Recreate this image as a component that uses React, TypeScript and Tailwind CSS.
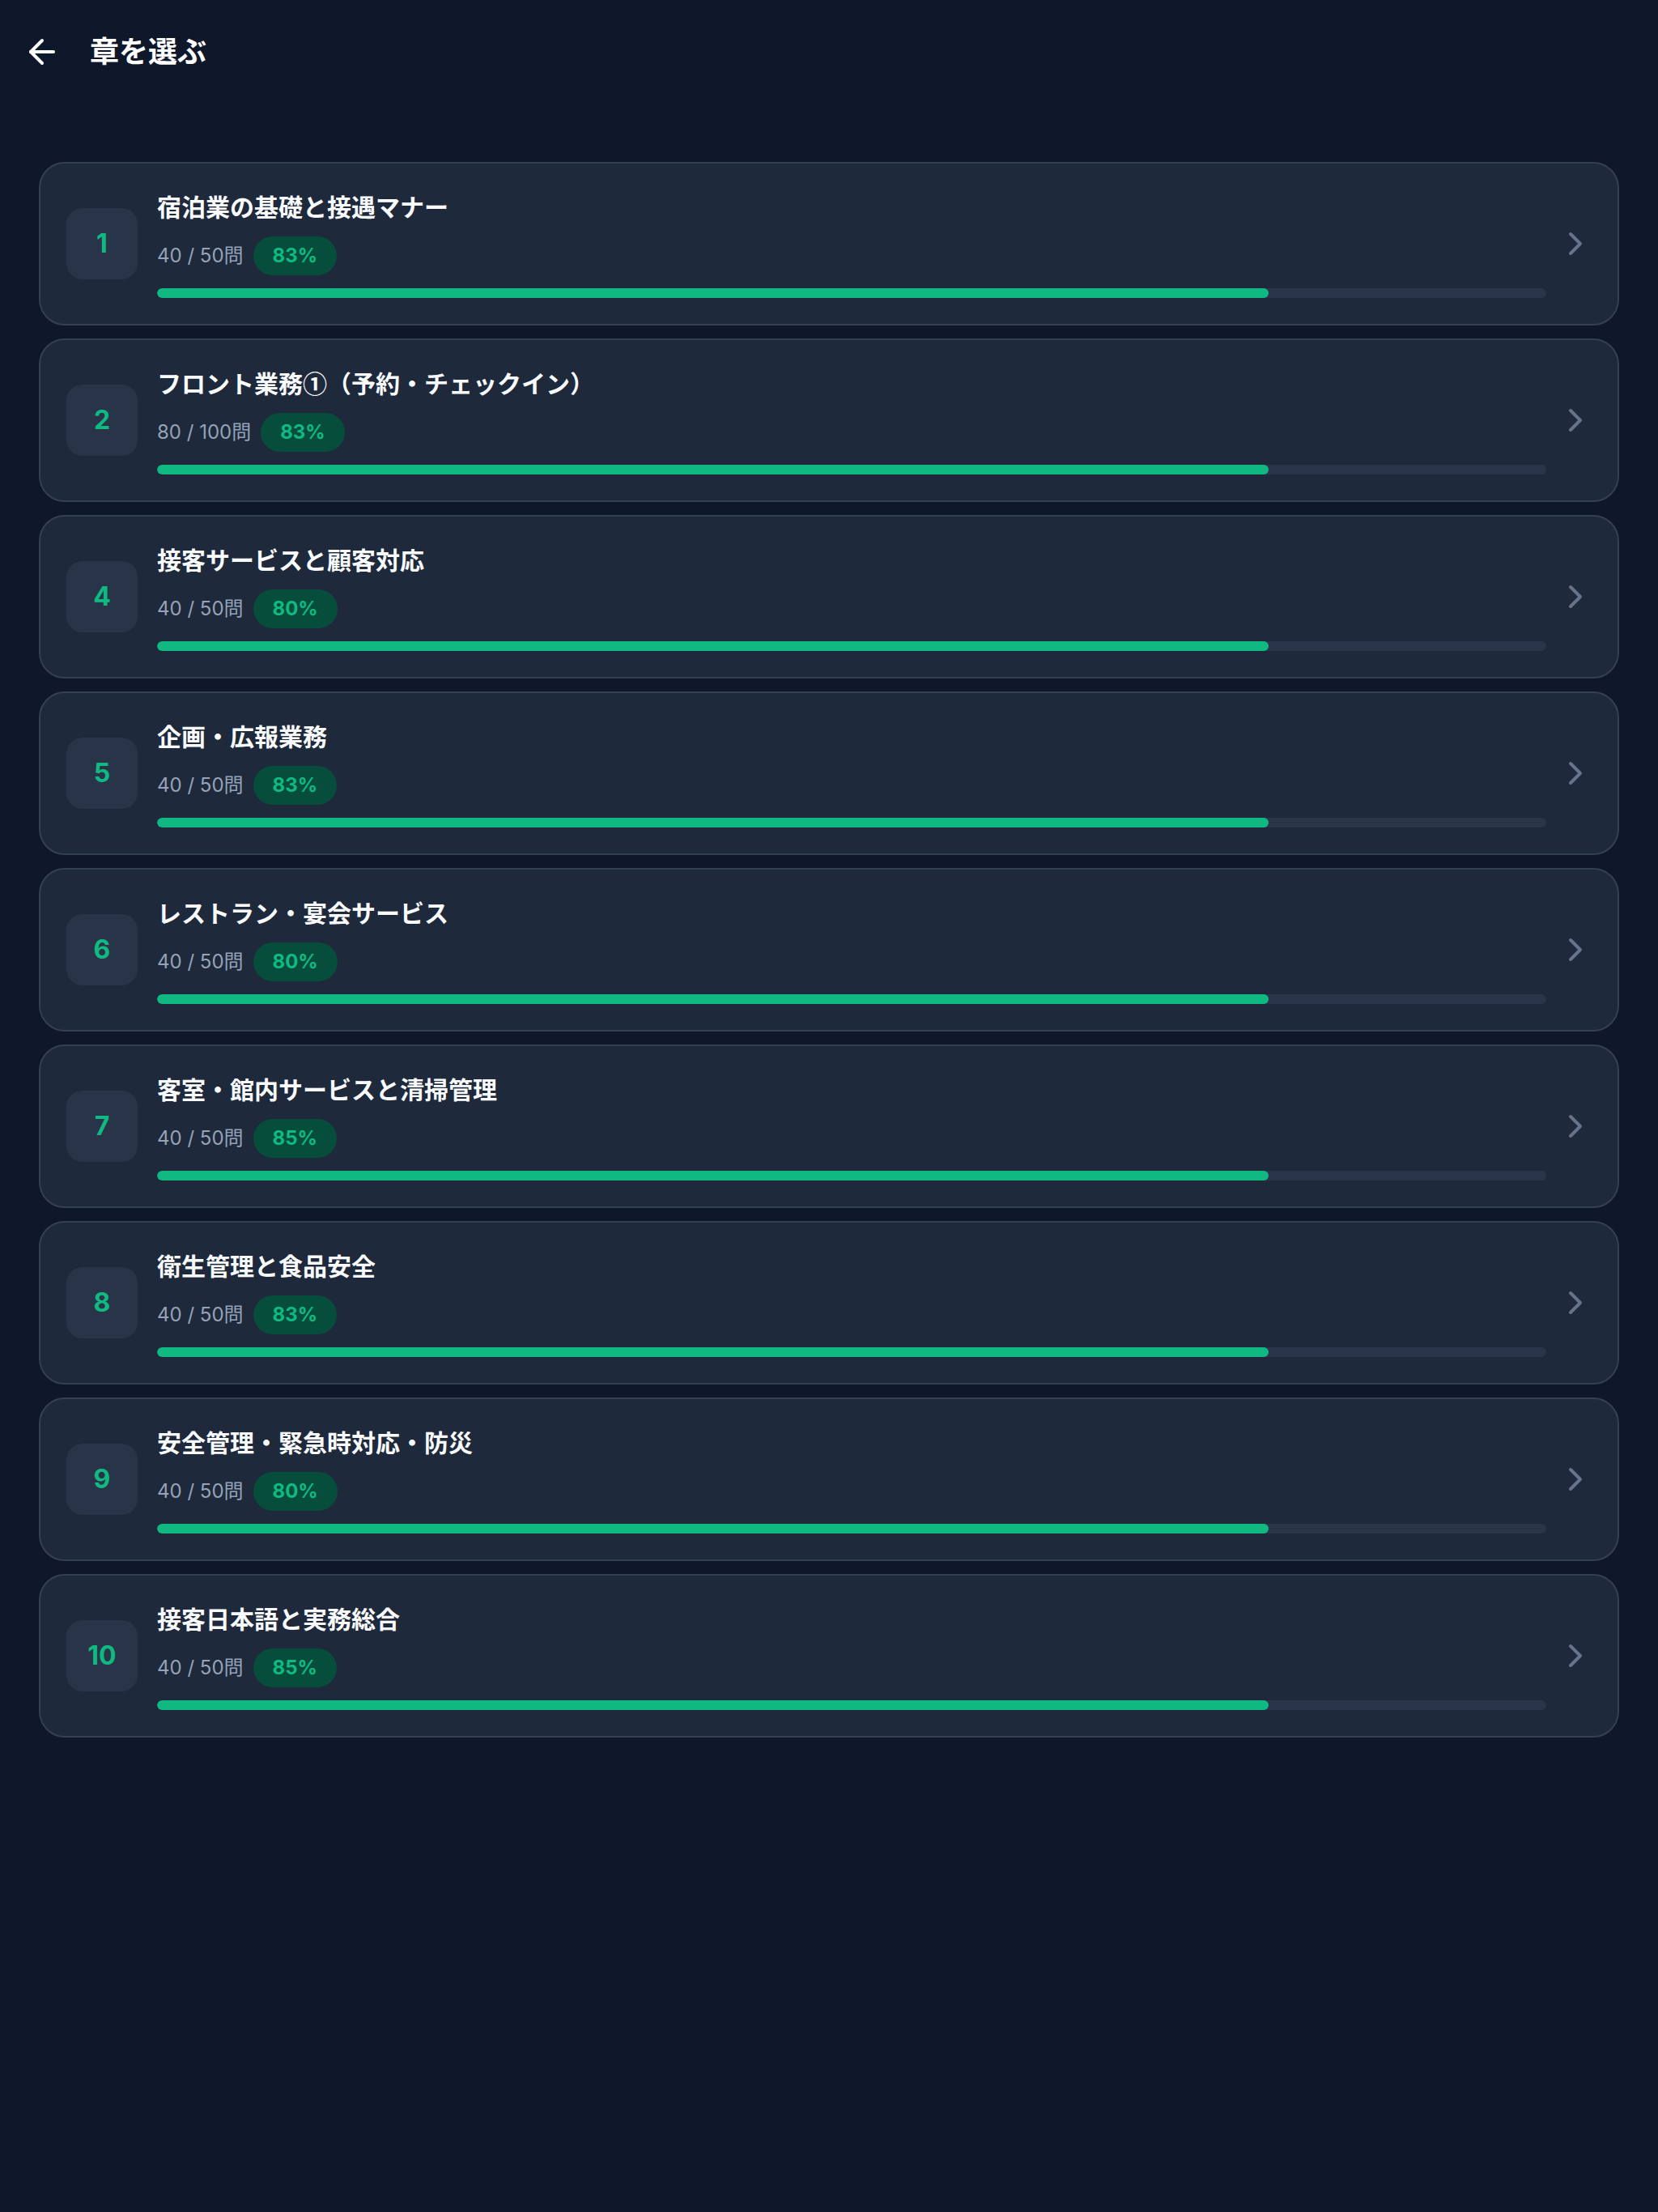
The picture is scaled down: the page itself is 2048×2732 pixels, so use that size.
import { ArrowLeft, ChevronRight } from "lucide-react"

type Chapter = {
  no: number
  title: string
  done: number
  total: number
  rate: number
}

const chapters: Chapter[] = [
  { no: 1, title: "宿泊業の基礎と接遇マナー", done: 40, total: 50, rate: 83 },
  { no: 2, title: "フロント業務①（予約・チェックイン）", done: 80, total: 100, rate: 83 },
  { no: 4, title: "接客サービスと顧客対応", done: 40, total: 50, rate: 80 },
  { no: 5, title: "企画・広報業務", done: 40, total: 50, rate: 83 },
  { no: 6, title: "レストラン・宴会サービス", done: 40, total: 50, rate: 80 },
  { no: 7, title: "客室・館内サービスと清掃管理", done: 40, total: 50, rate: 85 },
  { no: 8, title: "衛生管理と食品安全", done: 40, total: 50, rate: 83 },
  { no: 9, title: "安全管理・緊急時対応・防災", done: 40, total: 50, rate: 80 },
  { no: 10, title: "接客日本語と実務総合", done: 40, total: 50, rate: 85 },
]

function ChapterCard({ chapter }: { chapter: Chapter }) {
  const progress = (chapter.done / chapter.total) * 100

  return (
    <button className="w-full flex items-center pl-[32px] pr-[28px] py-[32px] bg-[#1e293b] border-2 border-[#334155] rounded-[32px] text-left">
      <div className="w-[88px] h-[88px] shrink-0 mr-[24px] rounded-[20px] bg-[#283548] flex items-center justify-center text-[32px] font-bold text-[#10b981]">
        {chapter.no}
      </div>

      <div className="flex-1 min-w-0 flex flex-col">
        <div
          className="text-[30px] leading-[40px] font-bold text-[#f8fafc]"
          style={{ fontFamily: '"Noto Sans CJK JP", sans-serif' }}
        >
          {chapter.title}
        </div>
        <div className="mt-[18px] flex items-center gap-[12px]">
          <span className="text-[24px] leading-[32px] text-[#94a3b8]">
            {chapter.done} / {chapter.total}問
          </span>
          <span className="h-[48px] px-[24px] flex items-center rounded-full bg-[#064e3b] text-[24px] font-bold text-[#10b981]">
            {chapter.rate}%
          </span>
        </div>
        <div className="mt-[16px] h-[12px] rounded-full bg-[#293548] overflow-hidden">
          <div className="h-full rounded-full bg-[#10b981]" style={{ width: `${progress}%` }} />
        </div>
      </div>

      <ChevronRight size={48} strokeWidth={2} className="shrink-0 ml-[12px] text-[#64748b]" />
    </button>
  )
}

export default function App() {
  return (
    <div
      className="min-h-screen bg-[#0f172a] text-white"
      style={{ fontFamily: 'Inter, "Noto Sans CJK JP", sans-serif' }}
    >
      <header className="h-[128px] flex items-center pl-[28px] gap-[35px]">
        <button className="w-[48px] h-[48px] flex items-center justify-center text-white">
          <ArrowLeft size={48} strokeWidth={2} />
        </button>
        <h1 className="text-[36px] font-bold">章を選ぶ</h1>
      </header>

      <main className="pt-[72px] px-[48px] flex flex-col gap-[16px]">
        {chapters.map((c) => (
          <ChapterCard key={c.no} chapter={c} />
        ))}
      </main>
    </div>
  )
}
